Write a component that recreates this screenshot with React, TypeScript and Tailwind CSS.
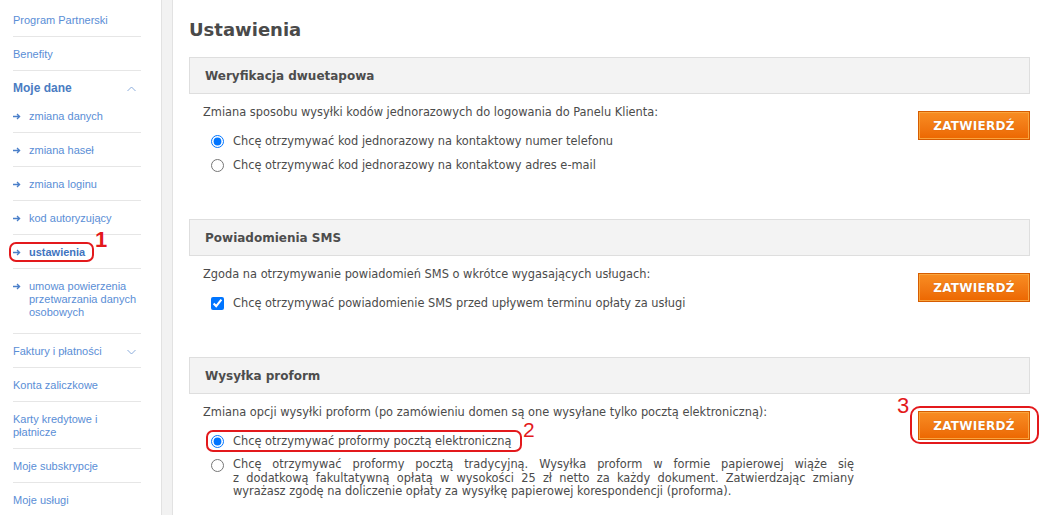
import type { ReactNode } from "react";

const SANS = "font-['Liberation_Sans',Arial,sans-serif]";
const VERDANA = "font-['DejaVu_Sans',Verdana,sans-serif]";

function Arrow() {
  return (
    <svg width="8" height="7" viewBox="0 0 8 7" className="mr-[8px] shrink-0">
      <path d="M0 3.5h6.5M4 1l2.6 2.5L4 6" fill="none" stroke="#4a7fc9" strokeWidth="1.3" />
    </svg>
  );
}

function Chevron({ up }: { up?: boolean }) {
  return (
    <svg width="9" height="6" viewBox="0 0 9 6" className="mr-[5px]">
      <path d={up ? "M0.5 5L4.5 1l4 4" : "M0.5 1l4 4 4-4"} fill="none" stroke="#7fa4d8" strokeWidth="0.9" />
    </svg>
  );
}

function NavItem({ children, sub, active, last, pb = "pb-[9px]" }: { children: ReactNode; sub?: boolean; active?: boolean; last?: boolean; pb?: string }) {
  return (
    <div className={`pt-[11px] ${pb} leading-[13px] ${last ? "" : "border-b border-[#e6e6e6]"}`}>
      <div className={`flex ${sub ? "items-start" : ""} ${active ? "font-bold text-[#3f74c0]" : "text-[#5a8ed6]"}`}>
        {sub && (
          <span className="h-[13px] flex items-center">
            <Arrow />
          </span>
        )}
        <span>{children}</span>
      </div>
    </div>
  );
}

function Sidebar() {
  return (
    <aside className={`w-[161px] shrink-0 pl-[13px] pr-[20px] pt-[3px] text-[11px] ${SANS}`}>
      <NavItem>Program Partnerski</NavItem>
      <NavItem>Benefity</NavItem>
      <div className="pt-[11px] pb-[4px] leading-[13px] flex items-center justify-between font-bold text-[#4a7cc2] text-[12px]">
        <span>Moje dane</span>
        <Chevron up />
      </div>
      <NavItem sub>zmiana danych</NavItem>
      <NavItem sub>zmiana haseł</NavItem>
      <NavItem sub>zmiana loginu</NavItem>
      <NavItem sub>kod autoryzujący</NavItem>
      <NavItem sub active>ustawienia</NavItem>
      <NavItem sub pb="pb-[14px]">
        umowa powierzenia
        <br />
        przetwarzania danych
        <br />
        osobowych
      </NavItem>
      <div className="pt-[11px] pb-[9px] leading-[13px] border-b border-[#e6e6e6] flex items-center justify-between text-[#5a8ed6]">
        <span>Faktury i płatności</span>
        <Chevron />
      </div>
      <NavItem>Konta zaliczkowe</NavItem>
      <NavItem>
        Karty kredytowe i
        <br />
        płatnicze
      </NavItem>
      <NavItem>Moje subskrypcje</NavItem>
      <NavItem last>Moje usługi</NavItem>
    </aside>
  );
}

function SubmitButton() {
  return (
    <button className="mt-[17px] w-[112px] h-[29px] shrink-0 border border-[#d65c00] bg-gradient-to-b from-[#f88d22] to-[#ec6700] shadow-[inset_0_0_0_1px_#f9a43d] text-white font-bold text-[12px] tracking-[0.3px] [text-shadow:0_0_1px_rgba(120,50,0,0.4)]">
      ZATWIERDŹ
    </button>
  );
}

function Section({ title, desc, children, gap }: { title: string; desc: string; children: ReactNode; gap: string }) {
  return (
    <section className={gap}>
      <div className="h-[37px] bg-[#f3f3f3] border border-[#dedede] flex items-center px-[15px] font-bold text-[12px] text-[#4d4d4d]">
        {title}
      </div>
      <div className="flex justify-between">
        <div className="pl-[14px]">
          <p className="mt-[12px] leading-[13px]">{desc}</p>
          <div className="mt-[14px] pl-[8px] flex flex-col gap-[8px]">{children}</div>
        </div>
        <SubmitButton />
      </div>
    </section>
  );
}

function Option({ type, checked, children }: { type: "radio" | "checkbox"; checked?: boolean; children: ReactNode }) {
  return (
    <label className="flex items-start gap-[9px]">
      <span className="h-[16px] flex items-center">
        <input type={type} defaultChecked={checked} className="m-0 w-[13px] h-[13px] accent-[#0075ff]" />
      </span>
      <span className="leading-[16px]">{children}</span>
    </label>
  );
}

const Just = ({ children }: { children: ReactNode }) => (
  <span className="block text-justify [text-align-last:justify]">{children}</span>
);

export default function App() {
  return (
    <div className="relative flex w-[1045px] h-[515px] overflow-hidden bg-white">
      <Sidebar />
      <div className="w-[12px] shrink-0 bg-[#f2f2f2] border-x border-[#e2e2e2]" />
      <main className={`flex-1 pl-[16px] pr-[15px] text-[11.4px] text-[#4b4b4b] ${VERDANA}`}>
        <h1 className="mt-[18px] mb-[15px] leading-[24px] text-[18px] font-bold text-[#4a4a4a]">Ustawienia</h1>

        <Section
          title="Weryfikacja dwuetapowa"
          desc="Zmiana sposobu wysyłki kodów jednorazowych do logowania do Panelu Klienta:"
          gap="mb-[46px]"
        >
          <Option type="radio" checked>
            Chcę otrzymywać kod jednorazowy na kontaktowy numer telefonu
          </Option>
          <Option type="radio">Chcę otrzymywać kod jednorazowy na kontaktowy adres e-mail</Option>
        </Section>

        <Section
          title="Powiadomienia SMS"
          desc="Zgoda na otrzymywanie powiadomień SMS o wkrótce wygasających usługach:"
          gap="mb-[46px]"
        >
          <Option type="checkbox" checked>
            Chcę otrzymywać powiadomienie SMS przed upływem terminu opłaty za usługi
          </Option>
        </Section>

        <Section
          title="Wysyłka proform"
          desc="Zmiana opcji wysyłki proform (po zamówieniu domen są one wysyłane tylko pocztą elektroniczną):"
          gap=""
        >
          <Option type="radio" checked>
            Chcę otrzymywać proformy pocztą elektroniczną
          </Option>
          <Option type="radio">
            <span className="block w-[621px] leading-[13.5px] pt-[1px]">
              <Just>Chcę otrzymywać proformy pocztą tradycyjną. Wysyłka proform w formie papierowej wiąże się</Just>
              <Just>z dodatkową fakultatywną opłatą w wysokości 25 zł netto za każdy dokument. Zatwierdzając zmiany</Just>
              <span className="block">wyrażasz zgodę na doliczenie opłaty za wysyłkę papierowej korespondencji (proforma).</span>
            </span>
          </Option>
        </Section>
      </main>

      {/* annotations */}
      <div className="absolute left-[9px] top-[242px] w-[85px] h-[20px] rounded-[7px] border-2 border-[#e3191c]" />
      <span className={`absolute left-[95px] top-[228px] text-[22px] leading-[24px] font-bold text-[#e3191c] ${SANS}`}>1</span>
      <div className="absolute left-[206px] top-[430px] w-[316px] h-[22px] rounded-[7px] border-2 border-[#e3191c]" />
      <span className={`absolute left-[523px] top-[419px] text-[21px] leading-[21px] text-[#e3191c] ${SANS}`}>2</span>
      <div className="absolute left-[910px] top-[406px] w-[129px] h-[38px] rounded-[10px] border-2 border-[#e3191c]" />
      <span className={`absolute left-[897px] top-[394px] text-[22px] leading-[24px] text-[#e3191c] ${SANS}`}>3</span>
    </div>
  );
}
